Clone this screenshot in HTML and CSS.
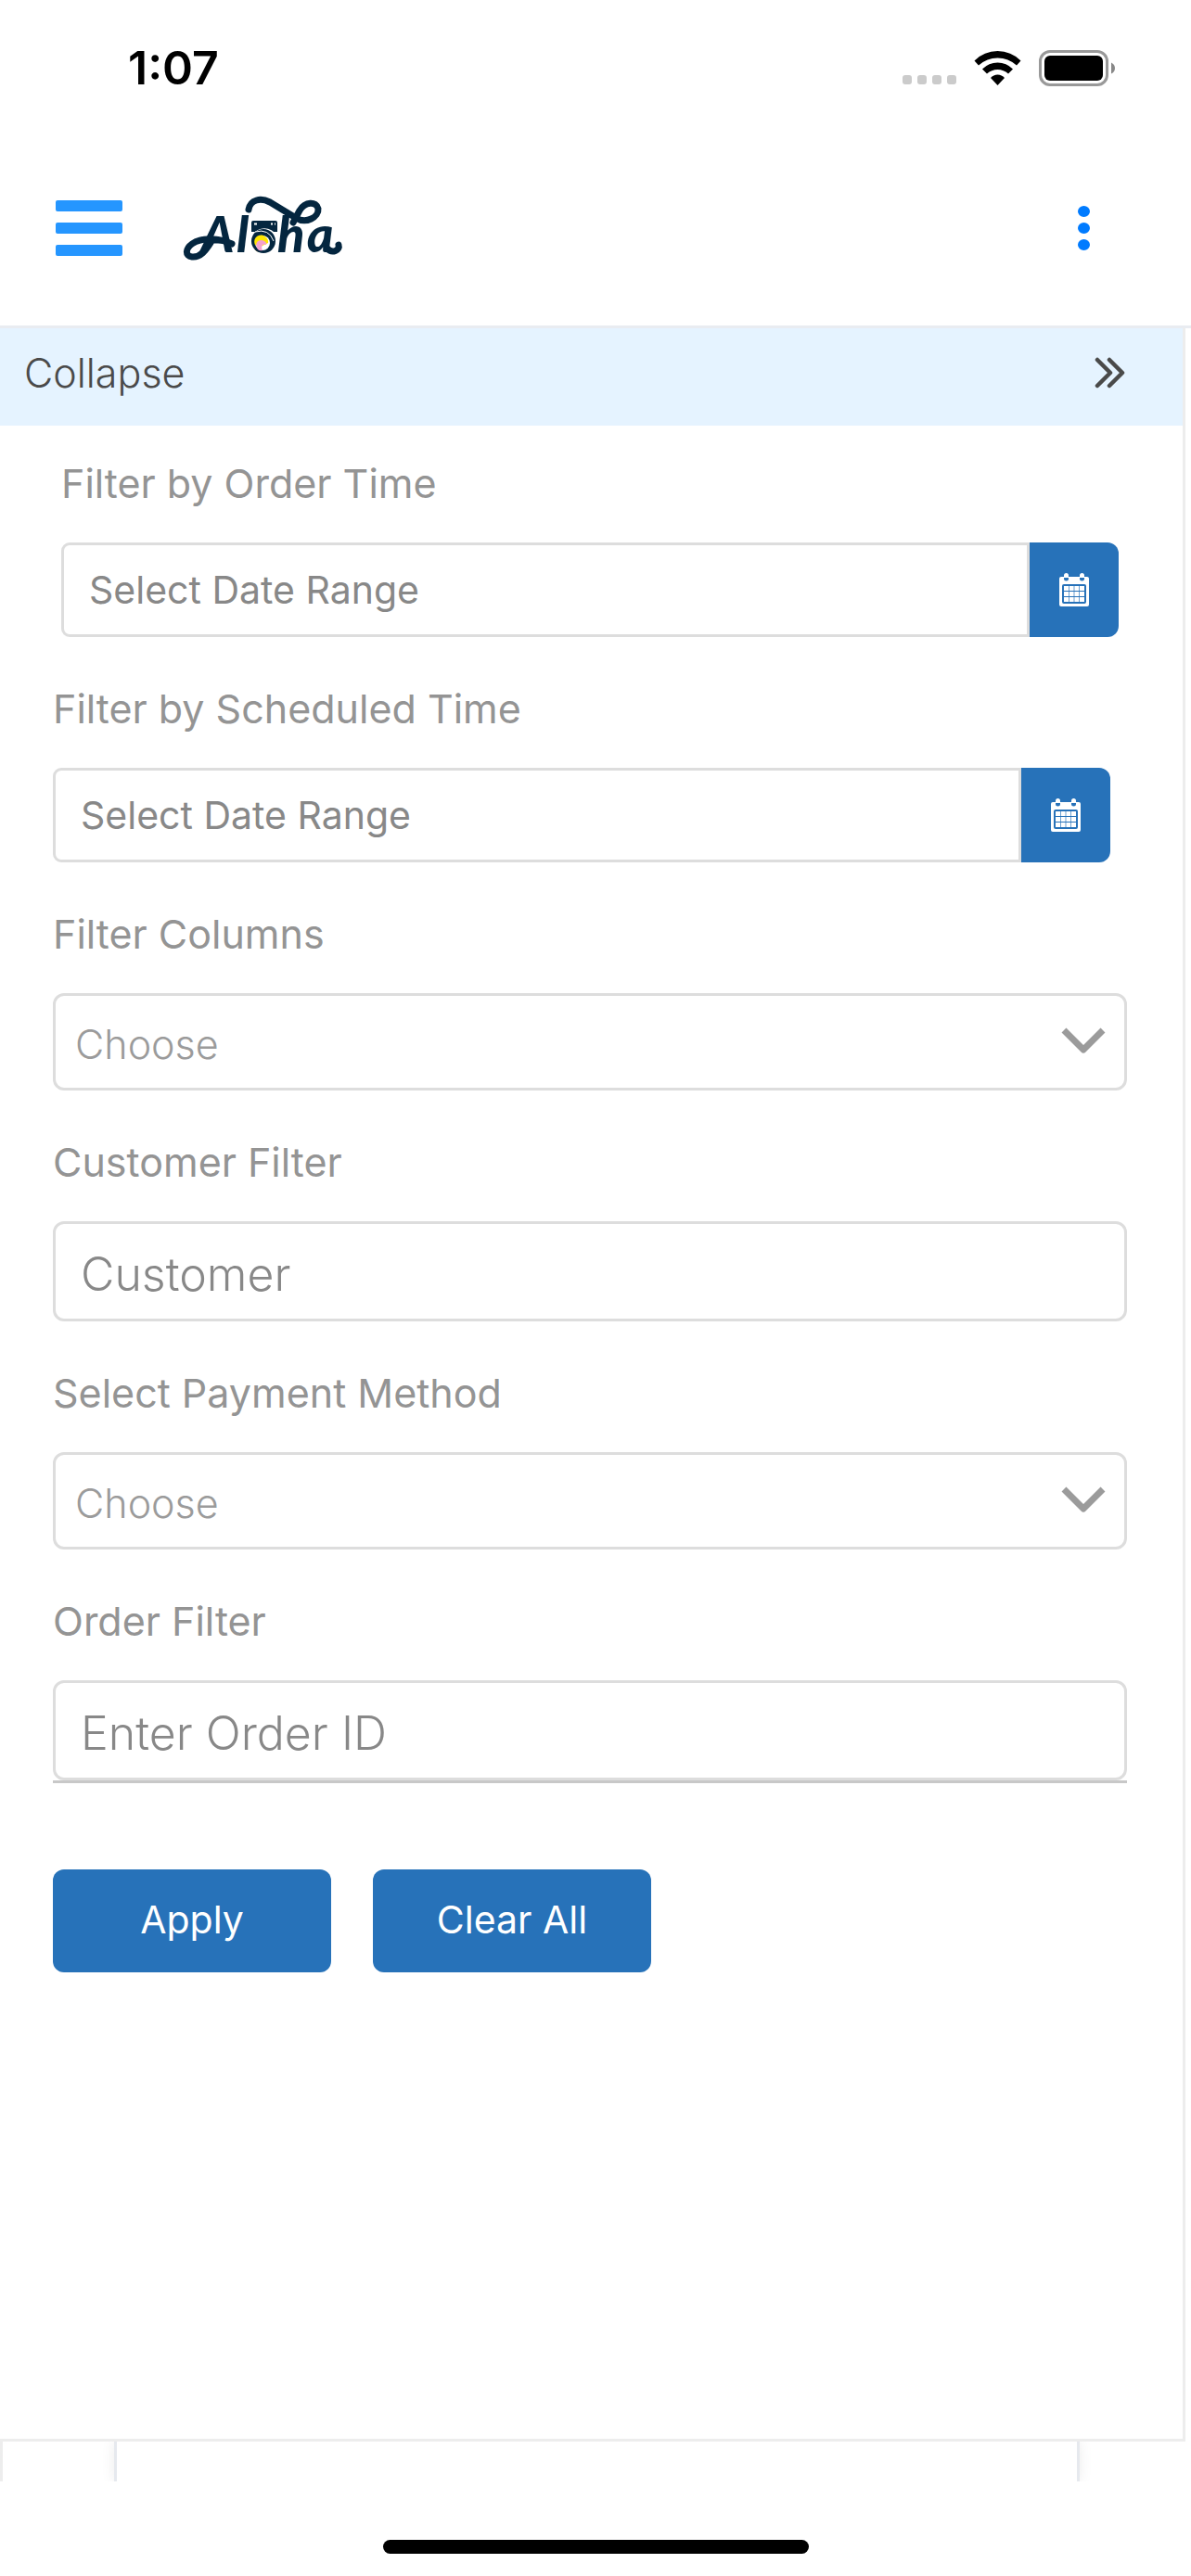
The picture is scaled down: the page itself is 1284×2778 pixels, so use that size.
FILE: index.html
```html
<!DOCTYPE html>
<html lang="en">

<head>
    <meta charset="UTF-8">
    <meta name="viewport" content="width=device-width, initial-scale=1.0">
    <title>Aloha Orders</title>
    <link rel="stylesheet" href="styles.css">
</head>

<body>
    <div class="status-bar">
        <span class="time">1:07</span>
        <div class="status-icons">
            <svg class="cell" width="58" height="12" viewBox="0 0 58 12" fill="#cbcbcb">
                <rect width="10" height="10" rx="3"/>
                <rect x="16" width="10" height="10" rx="3"/>
                <rect x="32" width="10" height="10" rx="3"/>
                <rect x="48" width="10" height="10" rx="3"/>
            </svg>
            <svg width="51" height="37" viewBox="0 0 51 37">
                <path d="M0.5 10.5Q11 0 25.500 0Q40 0 50.500 10.500L46 15.500Q37 7.500 25.500 7.500Q14 7.500 5 15.500Z"/>
                <path d="M9 19.500Q16 12.500 25.500 12.500Q35 12.500 42 19.500L37 24.500Q32 20 25.500 20Q19 20 14 24.500Z"/>
                <path d="M18 29Q21 25.500 25.500 25.500Q30 25.500 33 29L25.500 37Z"/>
            </svg>
            <svg width="82" height="39" viewBox="0 0 82 39">
                <rect x="1.500" y="1.500" width="72" height="36" rx="10.500" fill="none" stroke="#999" stroke-width="3"/>
                <rect x="6" y="6" width="63" height="27" rx="6"/>
                <path d="M78 13.500Q82 15.500 82 19.500Q82 23.500 78 25.500Z" fill="#888"/>
            </svg>
        </div>
    </div>

    <header class="top-bar">
        <button class="icon-btn" type="button" aria-label="Menu">
            <svg width="72" height="60" viewBox="0 0 72 60" fill="#2596ff">
                <rect width="72" height="12" rx="2"/>
                <rect y="24" width="72" height="12" rx="2"/>
                <rect y="48" width="72" height="12" rx="2"/>
            </svg>
        </button>
        <a class="logo" href="#" aria-label="Aloha">
            <svg width="180" height="96" viewBox="0 -12 180 96">
                <text class="logo-text" y="62"><tspan x="20">A</tspan><tspan x="58">l</tspan><tspan x="76" font-size="38">o</tspan><tspan x="102">h</tspan><tspan x="134">a</tspan></text>
                <!-- swashes -->
                <g fill="none" stroke="#04263f" stroke-width="7" stroke-linecap="round" stroke-linejoin="round">
                    <path d="M53 53C38 46 20 46 10 53C3 58 2 66 10 67C19 68 25 60 30 52"/>
                    <path d="M71 16C73 5 84 3 94 8L122 25C133 32 147 24 146 15C144 7 132 7 126 17L119 30"/>
                    <path d="M156 58C161 64 170 60 168 54"/>
                </g>
                <!-- washing machine -->
                <path d="M76 28H100Q102 28 102 30V40H74V30Q74 28 76 28Z" fill="#04263f"/>
                <path d="M77 31.500h3M95 31.500h2M99 31.500h1" stroke="#fff" stroke-width="2"/>
                <path d="M73 50A15 15 0 0 1 102 46L100 58H90L74 52Z" fill="#fff"/>
                <circle cx="87" cy="50" r="13" fill="#04263f"/>
                <path d="M78 40Q93 36 98 50" fill="none" stroke="#fff" stroke-width="1"/>
                <circle cx="86" cy="52" r="8" fill="#fff"/>
                <path d="M78 54C75 47 81 42 87 44Q93 47 92 52L84 56Z" fill="#ffe600"/>
                <path d="M81 59C76 51 83 47 88 50Q91 52 90 54C86 52 84 56 86 60Q83 61 81 59Z" fill="#f5a1cd"/>
            </svg>
        </a>
        <button class="icon-btn more" type="button" aria-label="More">
            <svg width="13" height="48" viewBox="0 0 13 48" fill="#007bff">
                <ellipse cx="6.500" cy="6" rx="6.500" ry="6"/>
                <ellipse cx="6.500" cy="24" rx="6.500" ry="6"/>
                <ellipse cx="6.500" cy="42" rx="6.500" ry="6"/>
            </svg>
        </button>
    </header>

    <main class="panel">
        <button class="collapse" type="button">
            <span>Collapse</span>
            <svg width="33" height="34" viewBox="0 0 33 34" fill="none" stroke="#4a4a4a" stroke-width="4.500" stroke-linecap="round" stroke-linejoin="round">
                <path d="M3 3L17 17L3 31"/>
                <path d="M16 3L30 17L16 31"/>
            </svg>
        </button>

        <form class="filters">
            <div class="field order-time">
                <label for="orderTime">Filter by Order Time</label>
                <div class="date-group">
                    <input class="date-input" id="orderTime" type="text" placeholder="Select Date Range">
                    <button class="date-btn" type="button" aria-label="Pick order time">
                        <svg width="32" height="36" viewBox="0 0 32 36">
                            <rect y="4" width="32" height="32" rx="2" fill="#fff"/>
                            <rect x="5" width="5" height="8" rx="2.500" fill="#fff"/>
                            <rect x="22" width="5" height="8" rx="2.500" fill="#fff"/>
                            <path d="M5 5h5v1a2.500 2.500 0 0 1-5 0zM22 5h5v1a2.500 2.500 0 0 1-5 0z" fill="#2772b9"/>
                            <rect x="3" y="12" width="26" height="21" rx="2" fill="#2772b9"/>
                            <path d="M5 16.500h22M5 22.500h22M5 28.500h22" stroke="#fff" stroke-width="5" stroke-dasharray="5 0.667"/>
                        </svg>
                    </button>
                </div>
            </div>

            <div class="field scheduled-time">
                <label for="scheduledTime">Filter by Scheduled Time</label>
                <div class="date-group">
                    <input class="date-input" id="scheduledTime" type="text" placeholder="Select Date Range">
                    <button class="date-btn" type="button" aria-label="Pick scheduled time">
                        <svg width="32" height="36" viewBox="0 0 32 36">
                            <rect y="4" width="32" height="32" rx="2" fill="#fff"/>
                            <rect x="5" width="5" height="8" rx="2.500" fill="#fff"/>
                            <rect x="22" width="5" height="8" rx="2.500" fill="#fff"/>
                            <path d="M5 5h5v1a2.500 2.500 0 0 1-5 0zM22 5h5v1a2.500 2.500 0 0 1-5 0z" fill="#2772b9"/>
                            <rect x="3" y="12" width="26" height="21" rx="2" fill="#2772b9"/>
                            <path d="M5 16.500h22M5 22.500h22M5 28.500h22" stroke="#fff" stroke-width="5" stroke-dasharray="5 0.667"/>
                        </svg>
                    </button>
                </div>
            </div>

            <div class="field">
                <label for="columns">Filter Columns</label>
                <div class="select-wrap">
                    <select id="columns">
                        <option>Choose</option>
                    </select>
                    <svg class="arrow" width="48" height="28" viewBox="0 0 48 28">
                        <path d="M3 3L24 24L45 3" fill="none" stroke="#9b9b9b" stroke-width="7" stroke-linejoin="round"/>
                    </svg>
                </div>
            </div>

            <div class="field">
                <label for="customer">Customer Filter</label>
                <input class="text-input" id="customer" type="text" placeholder="Customer">
            </div>

            <div class="field">
                <label for="payment">Select Payment Method</label>
                <div class="select-wrap">
                    <select id="payment">
                        <option>Choose</option>
                    </select>
                    <svg class="arrow" width="48" height="28" viewBox="0 0 48 28">
                        <path d="M3 3L24 24L45 3" fill="none" stroke="#9b9b9b" stroke-width="7" stroke-linejoin="round"/>
                    </svg>
                </div>
            </div>

            <div class="field underlined">
                <label for="orderId">Order Filter</label>
                <input class="text-input" id="orderId" type="text" placeholder="Enter Order ID">
            </div>

            <div class="actions">
                <button class="btn" type="button">Apply</button>
                <button class="btn" type="reset">Clear All</button>
            </div>
        </form>
    </main>

    <!-- top of the order list below the panel -->
    <div class="list-peek">
        <div class="card"></div>
    </div>

    <footer class="home-area">
        <div class="home-indicator"></div>
    </footer>
</body>
</html>
```

FILE: styles.css
```css
* {
    box-sizing: border-box;
}

body {
    margin: 0;
    min-height: 100vh;
    display: flex;
    flex-direction: column;
    background-color: #fff;
    font-family: Inter, "Liberation Sans", sans-serif;
    font-size: 43px;
}

button, input, select {
    font-family: inherit;
    font-size: 41px;
    margin: 0;
}

button {
    border: none;
    cursor: pointer;
}

svg {
    display: block;
}

/* phone status bar */
.status-bar {
    display: flex;
    justify-content: space-between;
    align-items: center;
    height: 146px;
    padding: 0 82px 0 138px;
}

.time {
    font-size: 50px;
    font-weight: 600;
}

.status-icons {
    display: flex;
    align-items: center;
    gap: 19px;
}

.cell {
    align-self: flex-end;
}

.top-bar {
    display: flex;
    align-items: center;
    height: 208px;
    padding: 0 109px 5px 60px;
    border-bottom: 3px solid #e9ecf1;
}

.icon-btn {
    padding: 0;
    background: none;
}

.more {
    margin-left: auto;
}

.logo {
    margin-left: 65px;
}

.logo-text {
    font-family: Lato, sans-serif;
    font-size: 54px;
    font-weight: 900;
    font-style: italic;
    fill: #04263f;
}

/* filter panel */
.panel {
    flex: 1;
    margin-right: 6px;
    border-right: 3px solid #ededed;
    border-bottom: 3px solid #ededed;
}

.collapse {
    display: flex;
    justify-content: space-between;
    align-items: center;
    width: 100%;
    height: 105px;
    padding: 0 62px 9px 26px;
    background-color: #e5f3ff;
    color: #4a4a4a;
    font-size: 43px;
    font-weight: 350;
}

.filters {
    padding: 35px 60px 60px 57px;
}

.field {
    margin-bottom: 50px;
}

.field label {
    display: block;
    margin-bottom: 37px;
    line-height: 54px;
    color: #949494;
}

.order-time {
    margin-left: 9px;
    margin-right: 9px;
}

.scheduled-time {
    margin-right: 18px;
}

.date-group {
    display: flex;
    height: 102px;
}

.date-input {
    flex: 1;
    min-width: 0;
    padding: 0 27px;
    border: 3px solid #ddd;
    border-radius: 9px 0 0 9px;
}

.date-btn {
    display: flex;
    justify-content: center;
    align-items: center;
    width: 96px;
    padding: 0;
    background-color: #2772b9;
    border-radius: 0 12px 12px 0;
}

.select-wrap {
    position: relative;
}

select {
    appearance: none;
    display: block;
    width: 100%;
    height: 105px;
    padding: 5px 90px 0 21px;
    border: 3px solid #ddd;
    border-radius: 12px;
    background-color: #fff;
    color: #9b9b9b;
    font-size: 43px;
    font-weight: 350;
}

.arrow {
    position: absolute;
    top: 37px;
    right: 23px;
    pointer-events: none;
}

.text-input {
    display: block;
    width: 100%;
    height: 108px;
    padding: 5px 27px 0;
    border: 3px solid #ddd;
    border-radius: 12px;
    font-size: 50px;
    font-weight: 350;
}

input::placeholder {
    color: #888;
    opacity: 1;
}

.underlined {
    border-bottom: 3px solid #c8c8c8;
}

.actions {
    display: flex;
    gap: 45px;
    padding-top: 43px;
}

.btn {
    width: 300px;
    height: 111px;
    padding: 0 0 3px;
    border-radius: 12px;
    background-color: #2772b9;
    color: #fff;
}

.list-peek {
    height: 43px;
    padding: 0 120px;
    border-left: 3px solid #ededed;
    overflow: hidden;
}

.card {
    height: 100%;
    border-left: 3px solid #e6e9ee;
    border-right: 3px solid #e6e9ee;
    box-shadow: 0 0 15px rgba(0, 0, 0, 0.08);
}

.home-area {
    display: flex;
    justify-content: center;
    height: 102px;
    padding-top: 63px;
}

.home-indicator {
    width: 459px;
    max-width: 60%;
    height: 15px;
    border-radius: 8px;
    background-color: #000;
}
```
